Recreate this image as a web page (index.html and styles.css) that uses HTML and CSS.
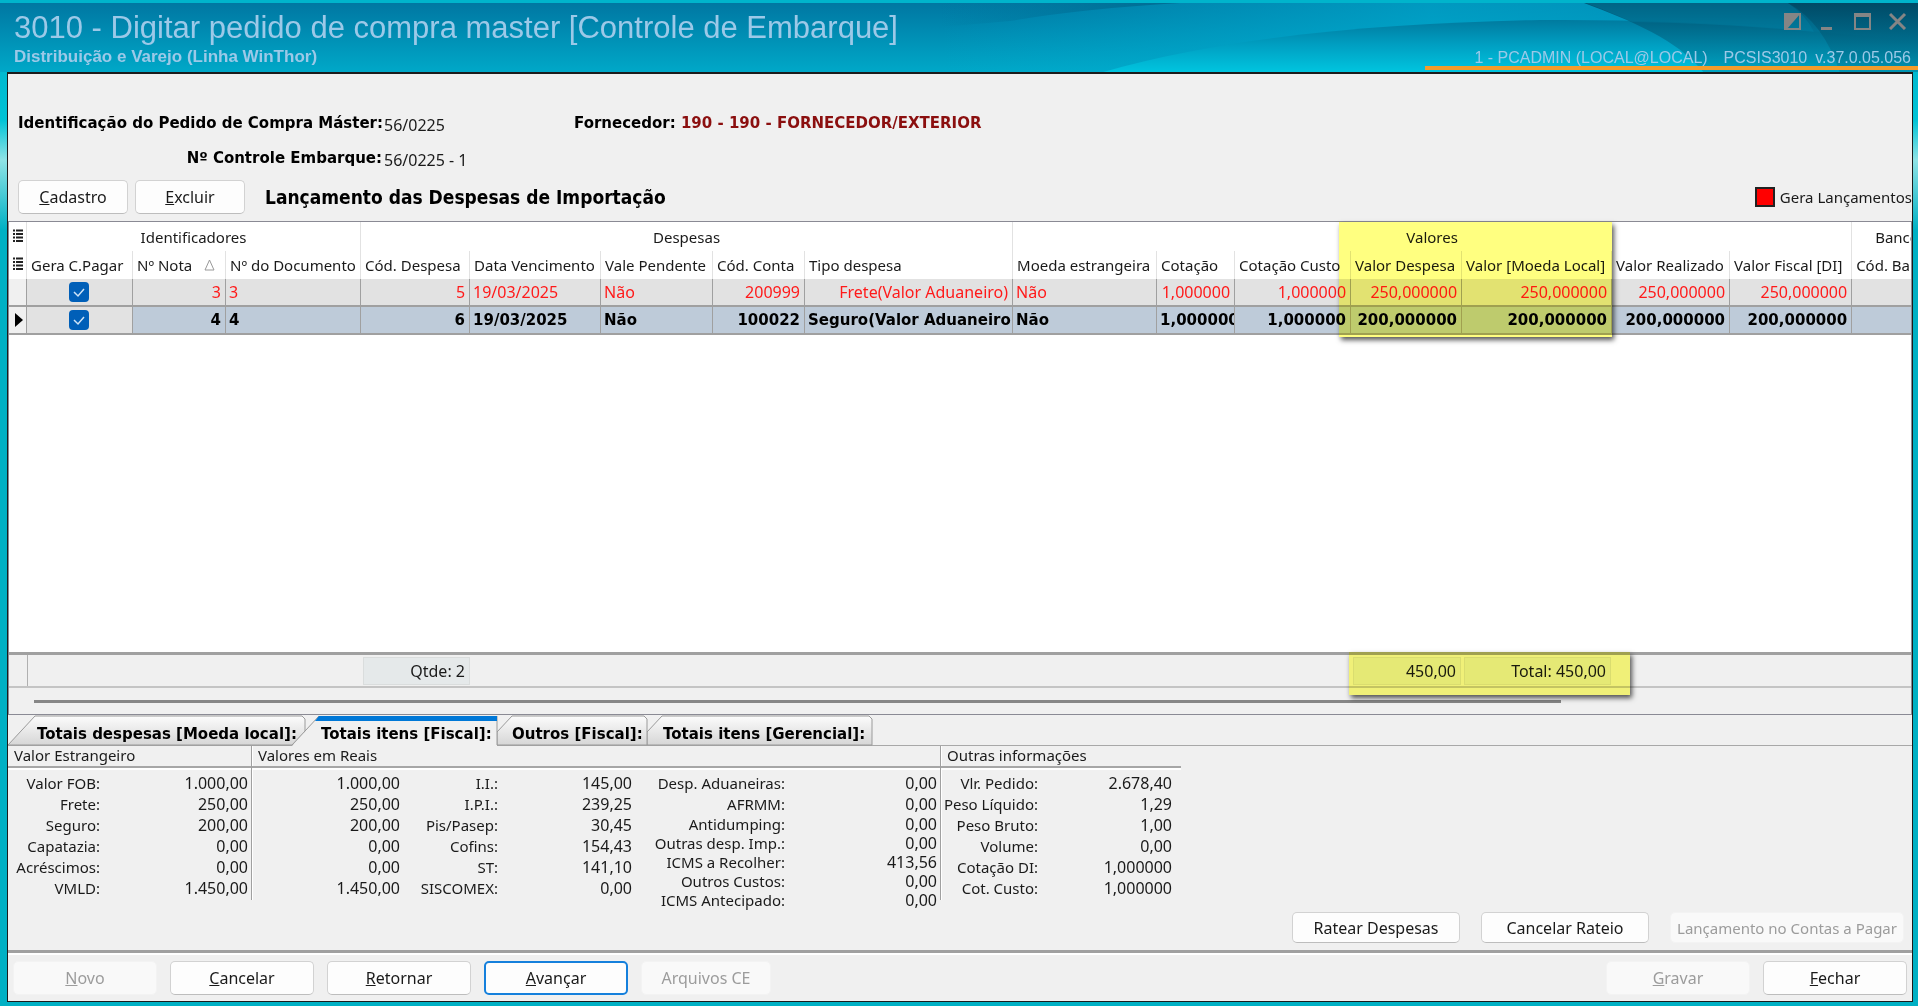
FILE: index.html
```
<!DOCTYPE html>
<html lang="pt-BR">
<head>
    <meta charset="UTF-8">
    <meta name="viewport" content="width=device-width, initial-scale=1.0">
    <title>3010 - Digitar pedido de compra master</title>
    <link rel="stylesheet" href="styles.css">
</head>
<body>

<header class="titlebar">
    <svg class="waves" width="978" height="70" viewBox="0 0 978 70" aria-hidden="true">
        <defs>
            <linearGradient id="side" x1="0" y1="0" x2="1" y2="0">
                <stop offset="0" stop-color="#00b0d4" stop-opacity="0"/>
                <stop offset="0.5" stop-color="#00b0d4" stop-opacity="0.6"/>
                <stop offset="1" stop-color="#00a0c8" stop-opacity="0.5"/>
            </linearGradient>
            <linearGradient id="deep" gradientUnits="userSpaceOnUse" x1="0" y1="14" x2="0" y2="70">
                <stop offset="0" stop-color="#00769b"/>
                <stop offset="0.5" stop-color="#009fc2"/>
                <stop offset="1" stop-color="#00c6e0"/>
            </linearGradient>
            <linearGradient id="dark" gradientUnits="userSpaceOnUse" x1="0" y1="0" x2="0" y2="70">
                <stop offset="0" stop-color="#004f6e" stop-opacity="0.9"/>
                <stop offset="1" stop-color="#0086a6" stop-opacity="0.5"/>
            </linearGradient>
            <linearGradient id="corner" gradientUnits="userSpaceOnUse" x1="0" y1="0" x2="0" y2="70">
                <stop offset="0" stop-color="#004560" stop-opacity="0.7"/>
                <stop offset="1" stop-color="#00708f" stop-opacity="0.3"/>
            </linearGradient>
            <linearGradient id="wedge" x1="0" y1="0" x2="1" y2="0">
                <stop offset="0" stop-color="#00658c" stop-opacity="0"/>
                <stop offset="1" stop-color="#00658c" stop-opacity="0.8"/>
            </linearGradient>
        </defs>
        <rect width="978" height="70" fill="url(#side)"/>
        <path d="M0 0H240Q140 6 70 18L0 24Z" fill="url(#wedge)"/>
        <path d="M160 70C290 32 450 20 600 17Q740 16 860 27L978 38V70Z" fill="url(#deep)"/>
        <path d="M644 0C690 17 740 38 764 70H978V0Z" fill="url(#dark)"/>
        <path d="M646 0C664 7 680 13 692 19Q780 20 874 29Q866 12 848 0Z" fill="#0088ac" opacity="0.3"/>
        <path d="M848 0Q884 20 900 70H978V0Z" fill="url(#corner)"/>
    </svg>
    <div class="titles">
        <h1>3010 - Digitar pedido de compra master [Controle de Embarque]</h1>
        <p>Distribuição e Varejo (Linha WinThor)</p>
    </div>
    <div class="session">
        <div class="window-buttons">
            <button type="button" aria-label="Recolher"><svg width="18" height="18" viewBox="0 0 18 18"><path d="M1 2H16V17H1Z" fill="none" stroke="#858585" stroke-width="2"/><path d="M1 1H17L3 17H1Z" fill="#858585"/></svg></button>
            <button type="button" aria-label="Minimizar"><svg width="18" height="18" viewBox="0 0 18 18"><path d="M2 15H13V18H2Z" fill="#858585"/></svg></button>
            <button type="button" aria-label="Maximizar"><svg width="18" height="18" viewBox="0 0 18 18"><path d="M1 2H16V17H1Z" fill="none" stroke="#858585" stroke-width="2"/><path d="M0 1H17V5H0Z" fill="#858585"/></svg></button>
            <button type="button" aria-label="Fechar janela"><svg width="18" height="18" viewBox="0 0 18 18"><path d="M1 2L16 17M16 2L1 17" fill="none" stroke="#858585" stroke-width="3"/></svg></button>
        </div>
        <div class="user"><span>1 - PCADMIN (LOCAL@LOCAL)</span><span class="routine">PCSIS3010</span><span>v.37.0.05.056</span></div>
    </div>
</header>

<main class="panel">
    <section class="order">
        <div class="order-line">
            <span class="order-label">Identificação do Pedido de Compra Máster:</span>
            <span class="order-value">56/0225</span>
            <span class="supplier">Fornecedor: <b>190 - 190 - FORNECEDOR/EXTERIOR</b></span>
        </div>
        <div class="order-line">
            <span class="order-label">Nº Controle Embarque:</span>
            <span class="order-value">56/0225 - 1</span>
        </div>
    </section>

    <div class="toolbar">
        <button type="button" class="btn small"><u>C</u>adastro</button>
        <button type="button" class="btn small"><u>E</u>xcluir</button>
        <h2>Lançamento das Despesas de Importação</h2>
        <span class="legend"><i class="red-box"></i>Gera Lançamentos</span>
    </div>

    <section class="grid">
        <div class="grid-body">
            <table class="expenses">
                <colgroup>
                    <col class="c-mark"><col class="c-pagar"><col class="c-nota"><col class="c-doc"><col class="c-cod"><col class="c-data">
                    <col class="c-vale"><col class="c-conta"><col class="c-tipo"><col class="c-moeda"><col class="c-cot"><col class="c-custo">
                    <col class="c-valor"><col class="c-local"><col class="c-real"><col class="c-fiscal"><col>
                </colgroup>
                <thead>
                    <tr class="bands">
                        <th><svg class="lines" width="10" height="14" viewBox="0 0 10 14"><path d="M0 1.5H2M3 1.5H10M0 5H2M3 5H10M0 8.5H2M3 8.5H10M0 12H2M3 12H10" stroke="#222" stroke-width="2"/></svg></th>
                        <th colspan="3">Identificadores</th>
                        <th colspan="5">Despesas</th>
                        <th colspan="7">Valores</th>
                        <th class="bank">Banco</th>
                    </tr>
                    <tr class="names">
                        <th><svg class="lines" width="10" height="14" viewBox="0 0 10 14"><path d="M0 1.5H2M3 1.5H10M0 5H2M3 5H10M0 8.5H2M3 8.5H10M0 12H2M3 12H10" stroke="#222" stroke-width="2"/></svg></th>
                        <th>Gera C.Pagar</th>
                        <th>Nº Nota <svg class="sort" width="11" height="12" viewBox="0 0 11 12"><path d="M5.5 1L10 11H1Z" fill="none" stroke="#999"/></svg></th>
                        <th>Nº do Documento</th>
                        <th>Cód. Despesa</th>
                        <th>Data Vencimento</th>
                        <th>Vale Pendente</th>
                        <th>Cód. Conta</th>
                        <th>Tipo despesa</th>
                        <th>Moeda estrangeira</th>
                        <th>Cotação</th>
                        <th>Cotação Custo</th>
                        <th>Valor Despesa</th>
                        <th>Valor [Moeda Local]</th>
                        <th>Valor Realizado</th>
                        <th>Valor Fiscal [DI]</th>
                        <th>Cód. Banco</th>
                    </tr>
                </thead>
                <tbody>
                    <tr class="late">
                        <td class="mark"></td>
                        <td class="tick"><input type="checkbox" aria-label="Gera C.Pagar, nota 3" checked></td>
                        <td class="num">3</td><td>3</td><td class="num">5</td><td>19/03/2025</td><td>Não</td>
                        <td class="num">200999</td><td class="num">Frete(Valor Aduaneiro)</td><td>Não</td>
                        <td class="num">1,000000</td><td class="num">1,000000</td><td class="num">250,000000</td>
                        <td class="num">250,000000</td><td class="num">250,000000</td><td class="num">250,000000</td><td></td>
                    </tr>
                    <tr class="current">
                        <td class="mark"><svg width="8" height="14" viewBox="0 0 8 14"><path d="M0 0L8 7L0 14Z"/></svg></td>
                        <td class="tick"><input type="checkbox" aria-label="Gera C.Pagar, nota 4" checked></td>
                        <td class="num">4</td><td>4</td><td class="num">6</td><td>19/03/2025</td><td>Não</td>
                        <td class="num">100022</td><td>Seguro(Valor Aduaneiro)</td><td>Não</td>
                        <td>1,000000</td><td class="num">1,000000</td><td class="num">200,000000</td>
                        <td class="num">200,000000</td><td class="num">200,000000</td><td class="num">200,000000</td><td></td>
                    </tr>
                </tbody>
            </table>
            <div class="highlight values"></div>
        </div>
        <div class="summary">
            <span class="sum count">Qtde: 2</span>
            <span class="sum amount">450,00</span>
            <span class="sum total">Total: 450,00</span>
            <div class="highlight totals-mark"></div>
        </div>
        <div class="scroll"><div class="thumb"></div></div>
    </section>

    <nav class="tabs" role="tablist">
        <svg class="tab-shapes" width="870" height="31" viewBox="0 0 870 31" aria-hidden="true">
            <defs>
                <linearGradient id="tab" x1="0" y1="0" x2="0" y2="1">
                    <stop offset="0" stop-color="#fcfcfc"/>
                    <stop offset="1" stop-color="#d6d6d6"/>
                </linearGradient>
            </defs>
            <path d="M639 30V17L654 1H861L864 4V30Z" fill="url(#tab)" stroke="#9a9a9a"/>
            <path d="M489 30V17L504 1H636L639 4V30Z" fill="url(#tab)" stroke="#9a9a9a"/>
            <path d="M0 30L27 1H294L297 4V30Z" fill="url(#tab)" stroke="#9a9a9a"/>
            <path d="M284 31L311 1H489V31Z" fill="#f0f0f0"/>
            <path d="M284 30L311 1M489 1V30" stroke="#9a9a9a"/>
            <path d="M311 1H489V6H307Z" fill="#0078d7"/>
        </svg>
        <button type="button" role="tab" class="tab one">Totais despesas [Moeda local]:</button>
        <button type="button" role="tab" class="tab two" aria-selected="true">Totais itens [Fiscal]:</button>
        <button type="button" role="tab" class="tab three">Outros [Fiscal]:</button>
        <button type="button" role="tab" class="tab four">Totais itens [Gerencial]:</button>
    </nav>

    <section class="totals">
        <div class="group foreign">
            <h3>Valor Estrangeiro</h3>
            <div class="group-body">
                <table class="figures f1">
                    <tr><th>Valor FOB:</th><td>1.000,00</td></tr>
                    <tr><th>Frete:</th><td>250,00</td></tr>
                    <tr><th>Seguro:</th><td>200,00</td></tr>
                    <tr><th>Capatazia:</th><td>0,00</td></tr>
                    <tr><th>Acréscimos:</th><td>0,00</td></tr>
                    <tr><th>VMLD:</th><td>1.450,00</td></tr>
                </table>
            </div>
        </div>
        <div class="group local">
            <h3>Valores em Reais</h3>
            <div class="group-body">
                <table class="figures f2">
                    <tr><td>1.000,00</td><th>I.I.:</th><td>145,00</td></tr>
                    <tr><td>250,00</td><th>I.P.I.:</th><td>239,25</td></tr>
                    <tr><td>200,00</td><th>Pis/Pasep:</th><td>30,45</td></tr>
                    <tr><td>0,00</td><th>Cofins:</th><td>154,43</td></tr>
                    <tr><td>0,00</td><th>ST:</th><td>141,10</td></tr>
                    <tr><td>1.450,00</td><th>SISCOMEX:</th><td>0,00</td></tr>
                </table>
                <table class="figures f3">
                    <tr><th>Desp. Aduaneiras:</th><td>0,00</td></tr>
                    <tr><th>AFRMM:</th><td>0,00</td></tr>
                    <tr><th>Antidumping:</th><td>0,00</td></tr>
                    <tr><th>Outras desp. Imp.:</th><td>0,00</td></tr>
                    <tr><th>ICMS a Recolher:</th><td>413,56</td></tr>
                    <tr><th>Outros Custos:</th><td>0,00</td></tr>
                    <tr><th>ICMS Antecipado:</th><td>0,00</td></tr>
                </table>
            </div>
        </div>
        <div class="group other">
            <h3>Outras informações</h3>
            <div class="group-body">
                <table class="figures f4">
                    <tr><th>Vlr. Pedido:</th><td>2.678,40</td></tr>
                    <tr><th>Peso Líquido:</th><td>1,29</td></tr>
                    <tr><th>Peso Bruto:</th><td>1,00</td></tr>
                    <tr><th>Volume:</th><td>0,00</td></tr>
                    <tr><th>Cotação DI:</th><td>1,000000</td></tr>
                    <tr><th>Cot. Custo:</th><td>1,000000</td></tr>
                </table>
            </div>
        </div>
    </section>

    <div class="actions">
        <button type="button" class="btn medium">Ratear Despesas</button>
        <button type="button" class="btn medium">Cancelar Rateio</button>
        <button type="button" class="btn large" disabled>Lançamento no Contas a Pagar</button>
    </div>

    <footer class="footer">
        <button type="button" class="btn" disabled><u>N</u>ovo</button>
        <button type="button" class="btn"><u>C</u>ancelar</button>
        <button type="button" class="btn"><u>R</u>etornar</button>
        <button type="button" class="btn primary"><u>A</u>vançar</button>
        <button type="button" class="btn files" disabled>Arquivos CE</button>
        <button type="button" class="btn save" disabled><u>G</u>ravar</button>
        <button type="button" class="btn"><u>F</u>echar</button>
    </footer>
</main>

</body>
</html>
```

FILE: styles.css
```
* {
    box-sizing: border-box;
}
body {
    margin: 0;
    min-height: 100vh;
    display: flex;
    flex-direction: column;
    padding: 0 5px 4px 7px;
    border-top: 3px solid #00b4cc;
    background: linear-gradient(#00a9c6, #00c3d6 120px, #8fe3e6 160px, #00b0c4 230px, #00b0c4);
    font-family: "Noto Sans", sans-serif;
    font-size: 16px;
    line-height: 20px;
    color: #1a1a1a;
}
h1, h2, h3, p {
    margin: 0;
}
button, input {
    font: inherit;
    color: inherit;
}

/* title bar */
.titlebar {
    position: relative;
    display: flex;
    justify-content: space-between;
    height: 69px;
    margin: 0 -5px 0 -7px;
    padding-left: 14px;
    background: linear-gradient(#0077a2, #00a8c8);
    font-family: "Liberation Sans", Arial, sans-serif;
    color: #9cc9e8;
    overflow: hidden;
}
.waves {
    position: absolute;
    top: 0;
    right: 0;
}
.titles, .session {
    position: relative;
}
.titles h1 {
    padding-top: 7px;
    font-size: 31px;
    line-height: 36px;
    font-weight: normal;
}
.titles p {
    padding-top: 1px;
    font-size: 17px;
    line-height: 20px;
    font-weight: bold;
}
.session {
    display: flex;
    flex-direction: column;
    justify-content: space-between;
    width: 493px;
}
.window-buttons {
    display: flex;
    justify-content: flex-end;
    gap: 17px;
    padding: 9px 11px 0 0;
}
.window-buttons button {
    padding: 0;
    border: 0;
    background: none;
    line-height: 0;
}
.user {
    display: flex;
    justify-content: flex-end;
    gap: 8px;
    padding-right: 7px;
    margin-bottom: 2px;
    border-bottom: 4px solid #f39c2b;
    line-height: 16px;
}
.routine {
    margin-left: 8px;
}

/* main panel */
.panel {
    flex: 1;
    display: flex;
    flex-direction: column;
    border: 1px solid #1c1c1c;
    border-top-width: 2px;
    background: #f0f0f0;
}
.order {
    display: flex;
    flex-direction: column;
    gap: 15px;
    padding: 39px 10px 0;
}
.order-line {
    display: flex;
}
.order-label {
    width: 364px;
    text-align: right;
    white-space: nowrap;
}
.order-label, .supplier {
    font-family: "DejaVu Sans", sans-serif;
    font-weight: bold;
    font-size: 15px;
    color: #000;
}
.order-value {
    width: 192px;
    padding: 2px 0 0 2px;
    line-height: 20px;
    height: 20px;
}
.supplier b {
    color: #8b0f0f;
}
.toolbar {
    display: flex;
    align-items: center;
    padding: 12px 0 7px 10px;
    gap: 7px;
}
.toolbar h2 {
    margin-left: 13px;
    font-family: "DejaVu Sans Condensed", sans-serif;
    font-size: 19px;
    color: #000;
}
.legend {
    display: flex;
    align-items: center;
    gap: 5px;
    margin-left: auto;
    font-size: 15px;
}
.red-box {
    width: 20px;
    height: 20px;
    border: 2px solid #222;
    background: #f00;
}
.btn {
    width: 144px;
    height: 34px;
    padding: 0;
    border: 1px solid #d2d2d2;
    border-bottom-color: #bdbdbd;
    border-radius: 5px;
    background: #fdfdfd;
    text-align: center;
    white-space: nowrap;
}
.btn:disabled {
    border-color: #f3f3f3;
    background: #f9f9f9;
    color: #9c9c9c;
}
.btn.small {
    width: 110px;
}
.btn.medium {
    width: 168px;
    height: 31px;
}
.btn.large {
    width: 234px;
    height: 31px;
    font-size: 15px;
}
.btn.primary {
    border: 2px solid #1580dc;
}
.btn.files {
    width: 130px;
}

/* expenses grid */
.grid {
    flex: 1;
    display: flex;
    flex-direction: column;
    border: 1px solid #8a8a94;
}
.grid-body {
    position: relative;
    flex: 1;
    background: #fff;
}
.expenses {
    width: 100%;
    table-layout: fixed;
    border-collapse: separate;
    border-spacing: 0;
}
.expenses th, .expenses td {
    padding: 0 3px;
    overflow: hidden;
    white-space: nowrap;
    text-align: left;
    border-right: 1px solid #e2e2e2;
}
.expenses th {
    height: 28px;
    font-size: 15px;
    font-weight: normal;
}
.expenses .names th {
    padding: 0 0 0 4px;
}
.expenses .bands th {
    height: 29px;
    text-align: center;
}
.expenses .bands .bank {
    padding-left: 23px;
    text-align: left;
}
.expenses td {
    height: 28px;
    background: #e2e2e2;
    border-right: 1px solid #a0a0a0;
    border-bottom: 2px solid #a0a0a0;
    padding: 0 4px 0 3px;
}
.expenses th:last-child, .expenses td:last-child {
    border-right: 0;
}
.expenses .num {
    text-align: right;
}
.expenses .mark {
    background: #f0f0f0;
    padding: 0 3px 0 0;
    text-align: right;
    line-height: 0;
}
.expenses .tick {
    text-align: center;
    line-height: 0;
}
.expenses .late {
    color: #ff1a1a;
}
.expenses .current {
    font-family: "DejaVu Sans", sans-serif;
    font-size: 15px;
    font-weight: bold;
    color: #000;
}
.expenses .current td {
    background: #becbd9;
}
.expenses .current .mark {
    background: #f0f0f0;
}
.expenses .current .tick {
    background: #e2e2e2;
}
.sort {
    margin-left: 8px;
}
.c-mark { width: 18px; }
.c-pagar { width: 106px; }
.c-nota { width: 93px; }
.c-doc { width: 135px; }
.c-cod { width: 109px; }
.c-data { width: 131px; }
.c-vale { width: 112px; }
.c-conta { width: 92px; }
.c-tipo { width: 208px; }
.c-moeda { width: 144px; }
.c-cot { width: 78px; }
.c-custo { width: 116px; }
.c-valor { width: 111px; }
.c-local { width: 150px; }
.c-real { width: 118px; }
.c-fiscal { width: 122px; }

.tick input {
    appearance: none;
    width: 20px;
    height: 20px;
    margin: 0;
    border-radius: 4px;
    background: #005fb8 url("data:image/svg+xml,%3Csvg xmlns='http://www.w3.org/2000/svg' viewBox='0 0 20 20'%3E%3Cpath d='M5 10L9 14L15 7' fill='none' stroke='%23cfe4f7' stroke-width='1.5'/%3E%3C/svg%3E");
}
.highlight {
    position: absolute;
    background: #ffff80;
    mix-blend-mode: multiply;
    box-shadow: 2px 3px 5px #555;
}
.highlight.values {
    top: 0;
    left: 1330px;
    width: 273px;
    height: 115px;
}
.summary {
    position: relative;
    display: flex;
    align-items: center;
    height: 36px;
    border-top: 3px solid #a0a0a0;
    border-bottom: 2px solid #c4c4c4;
}
.summary::before {
    content: "";
    align-self: stretch;
    width: 18px;
    border-right: 1px solid #b0b0b0;
}
.sum {
    height: 28px;
    padding: 3px 4px 0 0;
    border: 1px solid #dadddd;
    background: #e5e9ea;
    text-align: right;
}
.count {
    width: 107px;
    margin-left: 335px;
}
.amount {
    width: 108px;
    margin-left: 883px;
}
.total {
    width: 147px;
    margin-left: 3px;
}
.highlight.totals-mark {
    top: -3px;
    left: 1340px;
    width: 281px;
    height: 43px;
}
.scroll {
    height: 26px;
    padding: 12px 350px 0 25px;
}
.thumb {
    height: 3px;
    background: #868686;
}

/* tabs */
.tabs {
    position: relative;
    display: flex;
    height: 31px;
    border-bottom: 1px solid #a8a8a8;
}
.tab-shapes {
    position: absolute;
    top: 0;
    left: 0;
}
.tab {
    position: relative;
    padding: 8px 0 0;
    border: 0;
    background: none;
    font-family: "DejaVu Sans", sans-serif;
    font-size: 15px;
    line-height: 20px;
    font-weight: bold;
    color: #000;
    text-align: left;
    white-space: nowrap;
}
.tab.one {
    width: 284px;
    padding-left: 29px;
}
.tab.two {
    width: 205px;
    padding-left: 29px;
}
.tab.three {
    width: 150px;
    padding-left: 15px;
}
.tab.four {
    width: 226px;
    padding-left: 16px;
}

/* totals */
.totals {
    display: flex;
    height: 166px;
}
.group h3 {
    height: 22px;
    padding-left: 6px;
    border-bottom: 2px solid #a6a6a6;
    box-shadow: 0 2px #fff;
    font-size: 15px;
    line-height: 19px;
    font-weight: normal;
}
.foreign, .local {
    height: 154px;
    border-right: 1px solid #a0a0a0;
    box-shadow: 1px 0 #fff;
}
.foreign {
    width: 244px;
}
.local {
    width: 689px;
}
.other {
    width: 240px;
}
.group-body {
    display: flex;
    align-items: flex-start;
    padding-top: 5px;
}
.figures {
    border-spacing: 0;
    table-layout: fixed;
}
.figures th, .figures td {
    height: 21px;
    padding: 0;
    line-height: 19px;
    font-weight: normal;
    text-align: right;
    white-space: nowrap;
}
.figures th {
    font-size: 15px;
}
.f1 { width: 240px; }
.f1 th { width: 92px; }
.f2 { width: 380px; }
.f2 td:first-child { width: 148px; }
.f2 th { width: 98px; }
.f3 { width: 305px; }
.f3 th { width: 153px; }
.f3 tr:nth-child(n+3) > * {
    height: 19px;
}
.f4 { width: 231px; }
.f4 th { width: 97px; }

.actions {
    display: flex;
    justify-content: flex-end;
    gap: 21px;
    padding: 0 8px 7px 0;
}
.footer {
    display: flex;
    gap: 13px;
    padding: 8px 5px 6px;
    border-top: 3px solid #a0a0a0;
    box-shadow: inset 0 2px #fff;
}
.save {
    margin-left: auto;
}
```
